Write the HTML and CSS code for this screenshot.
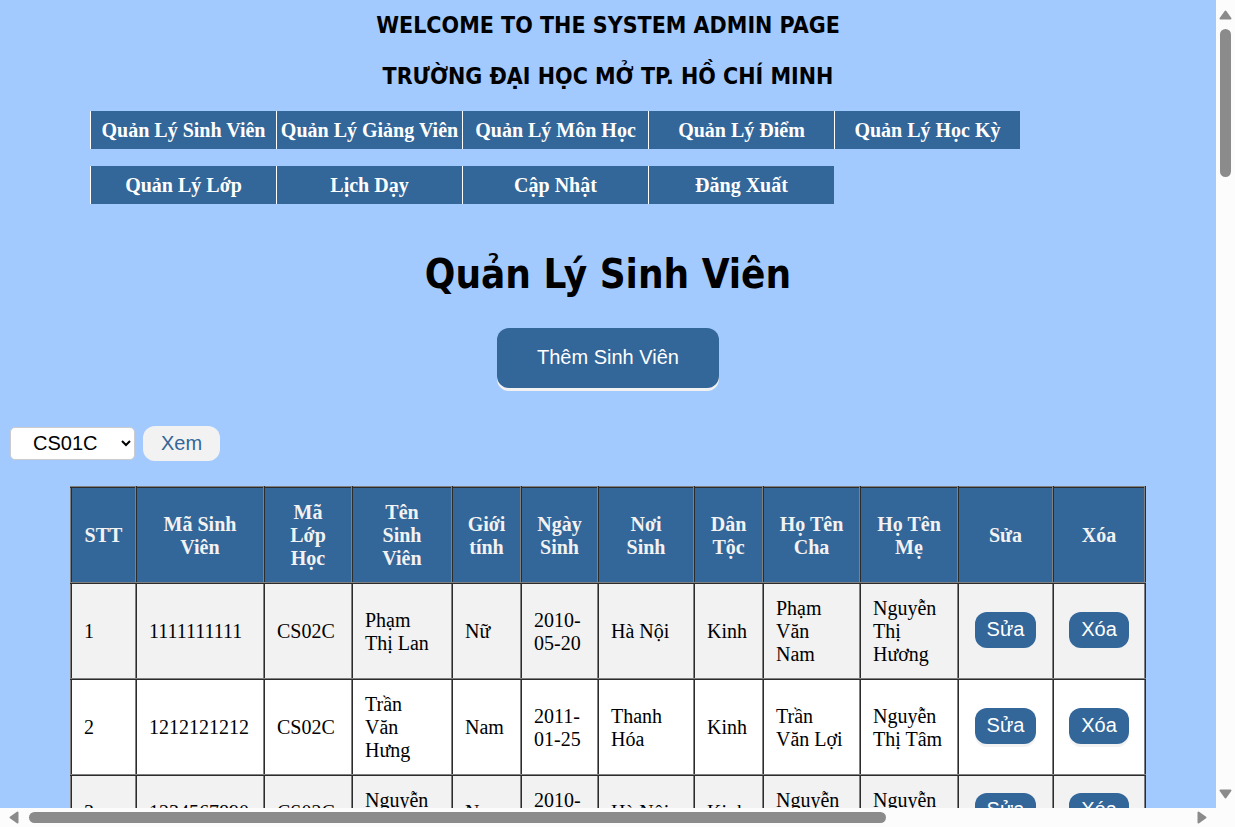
FILE: index.html
```html
<!DOCTYPE html>
<html lang="vi">
<head>
<meta charset="utf-8">
<title>Quản Lý Sinh Viên</title>
<link rel="stylesheet" href="styles.css">
</head>
<body>
<div class="viewport">
  <div class="page">
    <header class="banner">
      <h2 class="banner-title">WELCOME TO THE SYSTEM ADMIN PAGE</h2>
      <h2 class="banner-title">TRƯỜNG ĐẠI HỌC MỞ TP. HỒ CHÍ MINH</h2>
    </header>
    <nav class="menu">
      <a class="menu-link" href="#">Quản Lý Sinh Viên</a>
      <a class="menu-link" href="#">Quản Lý Giảng Viên</a>
      <a class="menu-link" href="#">Quản Lý Môn Học</a>
      <a class="menu-link" href="#">Quản Lý Điểm</a>
      <a class="menu-link" href="#">Quản Lý Học Kỳ</a>
      <a class="menu-link" href="#">Quản Lý Lớp</a>
      <a class="menu-link" href="#">Lịch Dạy</a>
      <a class="menu-link" href="#">Cập Nhật</a>
      <a class="menu-link" href="#">Đăng Xuất</a>
    </nav>
    <main>
      <h1 class="title">Quản Lý Sinh Viên</h1>
      <div class="add-row"><button class="button add-button" type="button">Thêm Sinh Viên</button></div>
      <form class="filter">
        <select class="class-select" aria-label="Lớp"><option>CS01C</option><option>CS02C</option></select>
        <button class="view-button" type="button">Xem</button>
      </form>
      <div class="table-wrap">
      <table class="students">
        <colgroup>
          <col class="col-index"><col class="col-id"><col class="col-class"><col class="col-name"><col class="col-gender"><col class="col-birth"><col class="col-place"><col class="col-ethnic"><col class="col-father"><col class="col-mother"><col class="col-edit"><col class="col-delete">
        </colgroup>
        <thead>
          <tr><th>STT</th><th>Mã Sinh Viên</th><th>Mã Lớp Học</th><th>Tên Sinh Viên</th><th>Giới tính</th><th>Ngày Sinh</th><th>Nơi Sinh</th><th>Dân Tộc</th><th>Họ Tên Cha</th><th>Họ Tên Mẹ</th><th>Sửa</th><th>Xóa</th></tr>
        </thead>
        <tbody>
          <tr><td>1</td><td>1111111111</td><td>CS02C</td><td>Phạm Thị Lan</td><td>Nữ</td><td>2010-05-20</td><td>Hà Nội</td><td>Kinh</td><td>Phạm Văn Nam</td><td>Nguyễn Thị Hương</td><td class="action"><button class="button" type="button">Sửa</button></td><td class="action"><button class="button" type="button">Xóa</button></td></tr>
          <tr><td>2</td><td>1212121212</td><td>CS02C</td><td>Trần Văn Hưng</td><td>Nam</td><td>2011-01-25</td><td>Thanh Hóa</td><td>Kinh</td><td>Trần Văn Lợi</td><td>Nguyễn Thị Tâm</td><td class="action"><button class="button" type="button">Sửa</button></td><td class="action"><button class="button" type="button">Xóa</button></td></tr>
          <tr><td>3</td><td>1234567890</td><td>CS02C</td><td>Nguyễn Văn A</td><td>Nam</td><td>2010-01-01</td><td>Hà Nội</td><td>Kinh</td><td>Nguyễn Văn B</td><td>Nguyễn Thị C</td><td class="action"><button class="button" type="button">Sửa</button></td><td class="action"><button class="button" type="button">Xóa</button></td></tr>
        </tbody>
      </table>
      </div>
    </main>
  </div>
  <div class="scrollbar scrollbar-y" aria-hidden="true">
    <svg class="arrow" viewBox="0 0 13 10"><path d="M6.5 1.5 11.5 8.5H1.500Z"/></svg>
    <div class="track"><div class="thumb"></div></div>
    <svg class="arrow" viewBox="0 0 13 10"><path d="M6.5 8.500 11.5 1.5H1.500Z"/></svg>
  </div>
  <div class="scrollbar scrollbar-x" aria-hidden="true">
    <svg class="arrow" viewBox="0 0 10 13"><path d="M1.5 6.500 8.5 1.5V11.500Z"/></svg>
    <div class="track"><div class="thumb"></div></div>
    <svg class="arrow" viewBox="0 0 10 13"><path d="M8.5 6.500 1.5 1.5V11.500Z"/></svg>
  </div>
  <div class="corner"></div>
</div>
</body>
</html>
```
FILE: styles.css
```css
* { box-sizing: border-box; }

body {
  margin: 0;
  font: 20px/23px "Liberation Serif", serif;
  color: #000;
}

.viewport {
  display: grid;
  grid-template: minmax(0, 1fr) 19px / minmax(0, 1fr) 19px;
  height: 100vh;
  background: #fcfcfc;
}

.page {
  overflow: hidden;
  padding: 10px;
  background: #a3caff;
}

.banner {
  display: grid;
  gap: 21px;
  text-align: center;
}

.banner-title {
  margin: 0;
  font: bold 23px/30px Tahoma, "DejaVu Sans Condensed", "Noto Sans", sans-serif;
}

.menu {
  display: flex;
  flex-wrap: wrap;
  gap: 17px 0;
  margin: 20px 80px 0;
}

.menu-link {
  width: 186px;
  padding: 8px 0 7px;
  border-left: 1px solid #fff;
  background: #336699;
  color: #fff;
  font-weight: bold;
  text-align: center;
  text-decoration: none;
  white-space: nowrap;
}

.title {
  margin: 42px 0 26px;
  font: bold 40px/56px Tahoma, "DejaVu Sans Condensed", "Noto Sans", sans-serif;
  text-align: center;
}

.add-row { text-align: center; }

.button {
  height: 36px;
  padding: 0 12px 2px;
  border: 0;
  border-radius: 12px;
  background: #336699;
  box-shadow: 0 3px #f2f2f2;
  color: #fff;
  font: 20px/23px "Liberation Sans", sans-serif;
}

.add-button {
  height: 60px;
  padding: 0 40px 2px;
}

.filter {
  display: flex;
  align-items: center;
  gap: 8px;
  margin-top: 38px;
}

.class-select {
  width: 125px;
  height: 33px;
  padding: 0 0 2px 18px;
  border: 1px solid #ccc;
  border-radius: 5px;
  background: #fff;
  color: #000;
  font: 20px/23px "Liberation Sans", sans-serif;
}

.view-button {
  height: 35px;
  padding: 0 18px;
  border: 0;
  border-radius: 12px;
  background: #f2f2f2;
  color: #336699;
  font: 20px/23px "Liberation Sans", sans-serif;
}

.table-wrap { margin: 25px 60px 0; }

.students {
  width: 100%;
  table-layout: fixed;
  border-collapse: collapse;
  background: #fff;
}

.students th,
.students td {
  padding: 13px 12px 12px;
  border: 2px inset gray;
  text-align: left;
}

.students th {
  background: #336699;
  color: #f2f2f2;
  text-align: center;
}

.students tbody tr:nth-child(odd) { background: #f2f2f2; }

.students .action {
  padding: 0 0 2px;
  text-align: center;
}

.col-index { width: 65px; }
.col-id { width: 128px; }
.col-class { width: 88px; }
.col-name { width: 100px; }
.col-gender { width: 69px; }
.col-birth { width: 77px; }
.col-place { width: 96px; }
.col-ethnic { width: 69px; }
.col-father { width: 97px; }
.col-mother { width: 98px; }
.col-edit { width: 95px; }
.col-delete { width: 92px; }

.scrollbar {
  display: flex;
  align-items: center;
  background: #fcfcfc;
}

.scrollbar-y {
  flex-direction: column;
  padding: 10px 0 9px;
}

.scrollbar-x { padding: 0 9px; }

.arrow { fill: #8b8b8b; stroke: #8b8b8b; stroke-width: 2px; stroke-linejoin: round; }
.scrollbar-y .arrow { width: 13px; height: 10px; }
.scrollbar-x .arrow { width: 10px; height: 13px; }

.track { flex: 1; }

.thumb {
  border-radius: 6px;
  background: #8b8b8b;
}

.scrollbar-y .track { padding: 9px 0; }
.scrollbar-y .thumb { width: 11px; height: 148px; }
.scrollbar-x .track { padding: 0 10px; }
.scrollbar-x .thumb { width: 74%; height: 11px; }
```
